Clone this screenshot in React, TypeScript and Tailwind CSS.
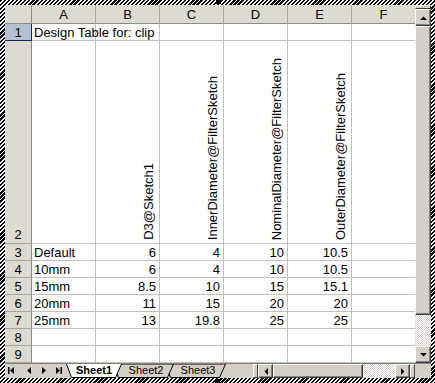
import React from "react";

const cols = ["A", "B", "C", "D", "E", "F"];
const heads = ["D3@Sketch1", "InnerDiameter@FilterSketch", "NominalDiameter@FilterSketch", "OuterDiameter@FilterSketch"];
const data = [
  ["Default", "6", "4", "10", "10.5"],
  ["10mm", "6", "4", "10", "10.5"],
  ["15mm", "8.5", "10", "15", "15.1"],
  ["20mm", "11", "15", "20", "20"],
  ["25mm", "13", "19.8", "25", "25"],
  ["", "", "", "", ""],
  ["", "", "", "", ""],
];

const cell = "shrink-0 w-[64px] border-r border-b border-[#c0c0c0] bg-white";
const rowHead = "shrink-0 w-[27px] flex items-center justify-center bg-[#dddbd1] border-r border-b border-r-[#8a8a84] border-b-[#a6a59d]";
const raised = "bg-[#d4d0c8] border border-t-white border-l-white border-r-[#404040] border-b-[#404040] shadow-[inset_-1px_-1px_#808080]";
const checker = "bg-[repeating-conic-gradient(#d4d0c8_0_25%,#ffffff_0_50%)] bg-[length:2px_2px]";

function Tri({ dir }: { dir: "up" | "down" | "left" | "right" }) {
  const pts = {
    up: "1,5 8,5 4.5,1.5",
    down: "1,1 8,1 4.5,4.5",
    left: "5,1 5,8 1.5,4.5",
    right: "1,1 1,8 4.5,4.5",
  }[dir];
  const w = dir === "up" || dir === "down" ? 9 : 6;
  const h = dir === "up" || dir === "down" ? 6 : 9;
  return (
    <svg width={w} height={h} viewBox={`0 0 ${w} ${h}`}>
      <polygon points={pts} fill="#000" />
    </svg>
  );
}

export default function App() {
  return (
    <div className="relative w-[435px] h-[383px] pl-[5px] pt-[5px] pr-[4px] pb-[5px] bg-[repeating-linear-gradient(135deg,#000_0_1.6px,#fff_1.6px_2.9px)] font-['Liberation_Sans',Arial,sans-serif] text-[13px] text-black leading-none overflow-hidden">
      <div className="absolute left-[216px] top-0 w-[5px] h-[4px] bg-black" />
      <div className="absolute left-[215px] bottom-0 w-[5px] h-[4px] bg-black" />
      <div className="w-[426px] h-[373px] flex flex-col bg-[#d4d0c8]">
        <div className="flex h-[358px]">
          {/* grid */}
          <div className="w-[410px] h-[358px] overflow-hidden flex flex-col bg-white">
            {/* column headers */}
            <div className="flex h-[19px] shrink-0">
              <div className="shrink-0 w-[27px] bg-[#dddbd1] border-r border-b border-r-[#8a8a84] border-b-[#8a8a84]" />
              {cols.map((c) => (
                <div key={c} className="shrink-0 w-[64px] flex items-center justify-center bg-[#dddbd1] border-r border-b border-r-[#a6a59d] border-b-[#8a8a84] pt-[1px]">
                  {c}
                </div>
              ))}
            </div>
            {/* row 1 */}
            <div className="flex h-[17px] shrink-0">
              <div className="shrink-0 w-[27px] flex items-center justify-center bg-[#b7bfd6] border-r border-b border-[#0a246a]">1</div>
              <div className={`${cell} relative`}>
                <span className="absolute left-[2px] top-[2px] whitespace-nowrap">Design Table for: clip</span>
              </div>
              {cols.slice(1).map((c) => (
                <div key={c} className={cell} />
              ))}
            </div>
            {/* row 2 */}
            <div className="flex h-[203px] shrink-0">
              <div className={`${rowHead} !items-end pb-[2px]`}>2</div>
              <div className={cell} />
              {heads.map((h) => (
                <div key={h} className={`${cell} flex items-end justify-end pr-[3px] pb-[3px]`}>
                  <span className="[writing-mode:vertical-rl] rotate-180 whitespace-nowrap leading-[15px]">{h}</span>
                </div>
              ))}
              <div className={cell} />
            </div>
            {/* rows 3-9 */}
            {data.map((r, i) => (
              <div key={i} className="flex h-[17px] shrink-0">
                <div className={rowHead}>{i + 3}</div>
                <div className={`${cell} flex items-center pl-[2px]`}>{r[0]}</div>
                {r.slice(1).map((v, j) => (
                  <div key={j} className={`${cell} flex items-center justify-end pr-[3px]`}>
                    {v}
                  </div>
                ))}
                <div className={cell} />
              </div>
            ))}
          </div>
          {/* vertical scrollbar */}
          <div className="w-[16px] h-[358px] flex flex-col">
            <div className={`h-[4px] ${raised} shadow-none`} />
            <div className={`h-[17px] flex items-center justify-center ${raised}`}>
              <Tri dir="up" />
            </div>
            <div className={`h-[289px] ${raised}`} />
            <div className={`h-[31px] ${checker}`} />
            <div className={`h-[17px] flex items-center justify-center ${raised}`}>
              <Tri dir="down" />
            </div>
          </div>
        </div>
        {/* bottom bar */}
        <div className="flex h-[15px] border-t border-[#808080] text-[11px]">
          <div className="w-[60px] shrink-0">
            <svg width="60" height="14" viewBox="0 0 60 14">
              <rect x="3" y="3" width="1.5" height="7" fill="#000" />
              <polygon points="9,3 9,10 5,6.5" fill="#000" />
              <polygon points="26,3 26,10 22,6.5" fill="#000" />
              <polygon points="37,3 37,10 41,6.5" fill="#000" />
              <polygon points="51,3 51,10 55,6.5" fill="#000" />
              <rect x="55.5" y="3" width="1.5" height="7" fill="#000" />
            </svg>
          </div>
          <div className="relative w-[161px] shrink-0 h-[14px]">
            <svg className="absolute left-0 top-0" width="161" height="14" viewBox="0 0 161 14">
              <polygon points="100.5,0 105.5,13.5 154.5,13.5 160.5,0" fill="#d4d0c8" stroke="#000" strokeWidth="1" />
              <polygon points="48.5,0 53.5,13.5 102.5,13.5 108.5,0" fill="#d4d0c8" stroke="#000" strokeWidth="1" />
              <polygon points="1.5,0 6.5,13.5 50.5,13.5 56.5,0" fill="#fff" />
              <polyline points="1.5,0 6.5,13.5 50.5,13.5 56.5,0" fill="none" stroke="#000" strokeWidth="1" />
            </svg>
            <div className="relative flex pl-[3px] pt-[1px]">
              <span className="w-[52px] text-center font-bold">Sheet1</span>
              <span className="w-[52px] text-center">Sheet2</span>
              <span className="w-[52px] text-center">Sheet3</span>
            </div>
          </div>
          <div className="w-[27px] shrink-0" />
          <div className={`w-[5px] shrink-0 ${raised} shadow-none`} />
          <div className={`w-[15px] shrink-0 flex items-center justify-center ${raised}`}>
            <Tri dir="left" />
          </div>
          <div className={`w-[90px] shrink-0 ${raised}`} />
          <div className={`w-[32px] shrink-0 ${checker}`} />
          <div className={`w-[15px] shrink-0 flex items-center justify-center ${raised}`}>
            <Tri dir="right" />
          </div>
          <div className={`w-[5px] shrink-0 ${raised} shadow-none`} />
          <div className="flex-1 bg-[#d4d0c8]" />
        </div>
      </div>
    </div>
  );
}
